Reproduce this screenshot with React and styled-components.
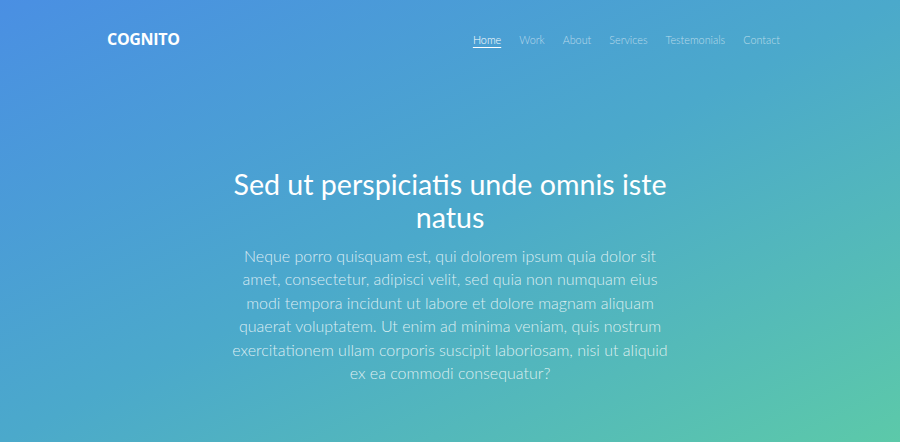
import React from "react";
import styled, { createGlobalStyle } from "styled-components";

const GlobalStyle = createGlobalStyle`
  html, body {
    margin: 0;
    padding: 0;
  }
  body {
    font-family: "Lato", "Liberation Sans", sans-serif;
  }
`;

const links = ["Home", "Work", "About", "Services", "Testemonials", "Contact"];

export default function App() {
  return (
    <>
      <GlobalStyle />
      <Page>
        <Header>
          <Logo>COGNITO</Logo>
          <Nav>
            {links.map((l, i) => (
              <NavLink key={l} href="#" $active={i === 0}>
                {l}
              </NavLink>
            ))}
          </Nav>
        </Header>
        <Hero>
          <Title>Sed ut perspiciatis unde omnis iste natus</Title>
          <Lead>
            Neque porro quisquam est, qui dolorem ipsum quia dolor sit amet,
            consectetur, adipisci velit, sed quia non numquam eius modi tempora
            incidunt ut labore et dolore magnam aliquam quaerat voluptatem. Ut
            enim ad minima veniam, quis nostrum exercitationem ullam corporis
            suscipit laboriosam, nisi ut aliquid ex ea commodi consequatur?
          </Lead>
        </Hero>
      </Page>
    </>
  );
}

const Page = styled.div`
  width: 100%;
  height: 442px;
  overflow: hidden;
  background: linear-gradient(to bottom right, #4a8fe3 0%, #4ba9cb 50%, #5cc9a9 100%);
  color: #fff;
`;

const Header = styled.header`
  display: flex;
  align-items: center;
  justify-content: space-between;
  padding: 28px 120px 0 107px;
  height: 22px;
`;

const Logo = styled.div`
  font-family: "Open Sans", sans-serif;
  font-weight: 700;
  font-size: 16px;
  letter-spacing: -0.3px;
`;

const Nav = styled.nav`
  display: flex;
  gap: 18px;
`;

const NavLink = styled.a`
  font-family: "Lato", sans-serif;
  font-weight: 300;
  font-size: 10.8px;
  text-decoration: ${(p) => (p.$active ? "underline" : "none")};
  text-underline-offset: 3px;
  color: ${(p) => (p.$active ? "#fff" : "rgba(255,255,255,0.6)")};
`;

const Hero = styled.section`
  width: 440px;
  margin: 0 auto;
  padding-top: 118px;
  text-align: center;
`;

const Title = styled.h1`
  margin: 0;
  font-family: "Lato", sans-serif;
  font-weight: 400;
  font-size: 28.6px;
  line-height: 33px;
`;

const Lead = styled.p`
  margin: 10px 0 0;
  font-family: "Lato", sans-serif;
  font-weight: 300;
  font-size: 16px;
  line-height: 23.4px;
  color: rgba(255, 255, 255, 0.8);
`;
